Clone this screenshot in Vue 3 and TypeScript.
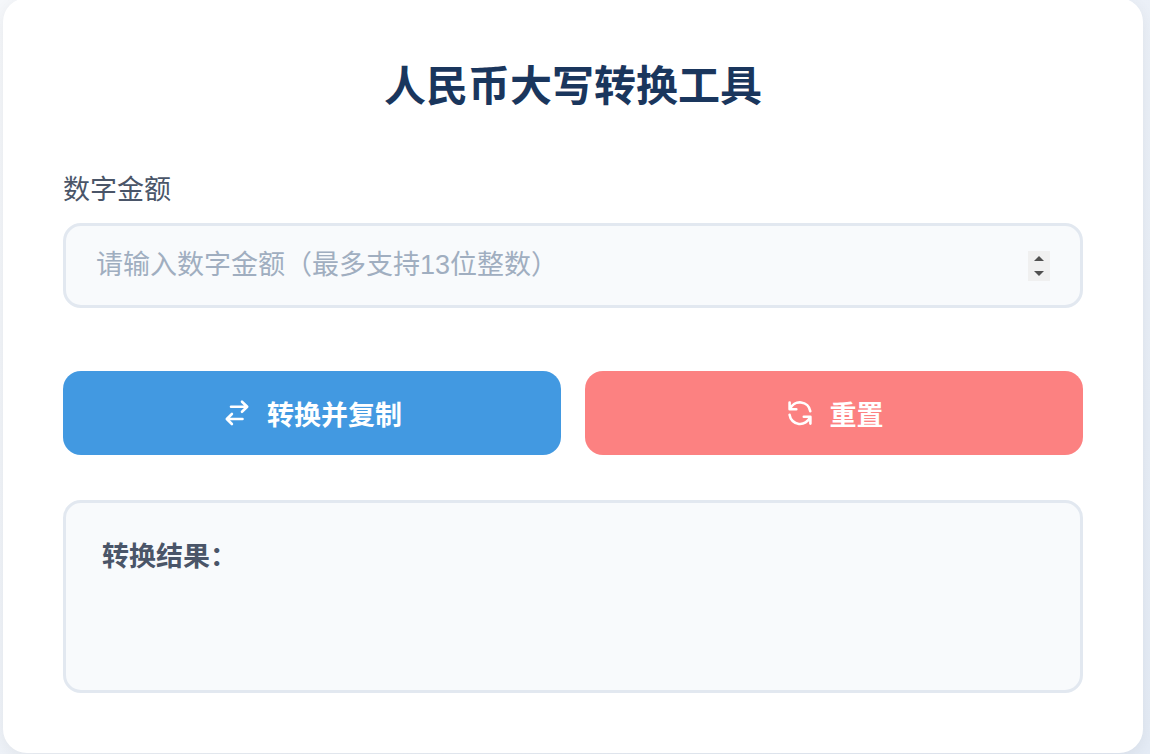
<script setup lang="ts">
import { ref } from 'vue'

const amount = ref<number | string>('')
const result = ref('')

const digits = '零壹贰叁肆伍陆柒捌玖'
const places = ['', '拾', '佰', '仟']
const groups = ['', '万', '亿', '万亿', '兆']

function toChinese(value: number): string {
  const [whole, cents] = value.toFixed(2).split('.')
  let text = ''
  let zero = false
  let groupUsed = false
  for (let i = 0; i < whole.length; i++) {
    const position = whole.length - 1 - i
    const digit = Number(whole[i])
    if (digit === 0) {
      zero = true
    } else {
      if (zero && text) text += '零'
      text += digits[digit] + places[position % 4]
      zero = false
      groupUsed = true
    }
    if (position % 4 === 0) {
      if (groupUsed) text += groups[position / 4]
      groupUsed = false
    }
  }
  text = (text || '零') + '元'
  if (cents === '00') return text + '整'
  if (cents[0] !== '0') text += digits[Number(cents[0])] + '角'
  else text += '零'
  if (cents[1] !== '0') text += digits[Number(cents[1])] + '分'
  return text
}

function step(delta: number) {
  amount.value = Math.max(0, Number(amount.value || 0) + delta)
}

function convert() {
  const value = Number(amount.value)
  if (amount.value === '' || value < 0 || value >= 1e13) return
  result.value = toChinese(value)
  navigator.clipboard?.writeText(result.value).catch(() => undefined)
}

function reset() {
  amount.value = ''
  result.value = ''
}
</script>

<template>
  <div class="page">
    <main class="card">
      <h1 class="title">人民币大写转换工具</h1>
      <form @submit.prevent="convert">
        <label class="label" for="amount">数字金额</label>
        <div class="field">
          <input
            id="amount"
            v-model="amount"
            class="input"
            type="number"
            step="any"
            placeholder="请输入数字金额（最多支持13位整数）"
          />
          <div class="stepper">
            <button type="button" aria-label="增加" @click="step(1)">
              <svg viewBox="0 0 10 5" aria-hidden="true"><path d="M0 5L5 0L10 5Z" /></svg>
            </button>
            <button type="button" aria-label="减少" @click="step(-1)">
              <svg viewBox="0 0 10 5" aria-hidden="true"><path d="M0 0L5 5L10 0Z" /></svg>
            </button>
          </div>
        </div>
        <div class="actions">
          <button class="action convert" type="submit">
            <svg class="icon" viewBox="0 0 30 30" aria-hidden="true">
              <path d="M9 8.8H25M20 3.7L25.2 8.8L20 13.8M20.5 21H5M9.9 16L4.8 21L9.9 26" />
            </svg>
            <span>转换并复制</span>
          </button>
          <button class="action reset" type="button" @click="reset">
            <svg class="icon" viewBox="0 0 30 30" aria-hidden="true">
              <path d="M4.6 4.5V11.2H11.3M5 11A10.6 10.6 0 0 1 25.3 13.3M25.4 25.6V18.8H18.8M25 19.2A10.6 10.6 0 0 1 4.6 16.8" />
            </svg>
            <span>重置</span>
          </button>
        </div>
      </form>
      <section class="result" aria-live="polite">
        <strong>转换结果：</strong>
        <p>{{ result }}</p>
      </section>
    </main>
  </div>
</template>

<style>
body {
  background: #e6eaf1;
  overflow: hidden;
}
</style>

<style scoped>
.page {
  box-sizing: border-box;
  min-height: 100vh;
  padding: 0 7px 1px 3px;
  background: linear-gradient(135deg, #f5f7fa 0%, #e4ebf5 100%);
  font-family: "Liberation Sans", "Noto Sans CJK SC", sans-serif;
  font-size: 27px;
  color: #4a5568;
}

.page::before {
  content: "";
  display: table;
}

.card {
  box-sizing: border-box;
  margin-top: -2px;
  padding: 61px 60px 60px;
  border-radius: 24px;
  background: #fff;
  box-shadow: 0 4px 16px rgba(0, 0, 0, 0.06);
}

.title {
  margin: 0 0 56px;
  font-size: 42px;
  line-height: 56px;
  font-weight: 700;
  text-align: center;
  color: #1a365d;
}

.label {
  display: block;
  margin-bottom: 14px;
  line-height: 38px;
}

.field {
  box-sizing: border-box;
  display: flex;
  align-items: center;
  height: 85px;
  padding: 0 30px;
  border: 3px solid #e2e8f0;
  border-radius: 18px;
  background: #f8fafc;
}

.field:focus-within {
  border-color: #4299e1;
}

.input {
  flex: 1;
  min-width: 0;
  height: 40px;
  padding: 0;
  border: 0;
  outline: 0;
  background: transparent;
  font: inherit;
  color: inherit;
  appearance: textfield;
}

.input::-webkit-inner-spin-button {
  appearance: none;
}

.input::placeholder {
  color: #a0aec0;
  opacity: 1;
}

.stepper {
  display: flex;
  flex-direction: column;
  width: 22px;
  height: 30px;
  background: #f0f0f0;
}

.stepper button {
  flex: 1;
  display: flex;
  align-items: center;
  justify-content: center;
  padding: 0;
  border: 0;
  background: none;
  cursor: pointer;
}

.stepper svg {
  width: 10px;
  height: 5px;
  fill: #505050;
}

.actions {
  display: grid;
  grid-template-columns: 1fr 1fr;
  gap: 24px;
  margin: 63px 0 45px;
}

.action {
  display: flex;
  align-items: center;
  justify-content: center;
  gap: 15px;
  height: 84px;
  padding: 0;
  border: 0;
  border-radius: 18px;
  font: inherit;
  font-weight: 700;
  color: #fff;
  cursor: pointer;
}

.convert {
  background: #4299e1;
}

.reset {
  background: #fc8181;
}

.icon {
  width: 30px;
  height: 30px;
  fill: none;
  stroke: currentColor;
  stroke-width: 2.6;
  stroke-linecap: round;
  stroke-linejoin: round;
}

.result {
  box-sizing: border-box;
  min-height: 193px;
  padding: 33px 36px;
  border: 3px solid #e2e8f0;
  border-radius: 18px;
  background: #f8fafc;
  line-height: 43px;
}

.result p {
  margin: 0;
}
</style>
